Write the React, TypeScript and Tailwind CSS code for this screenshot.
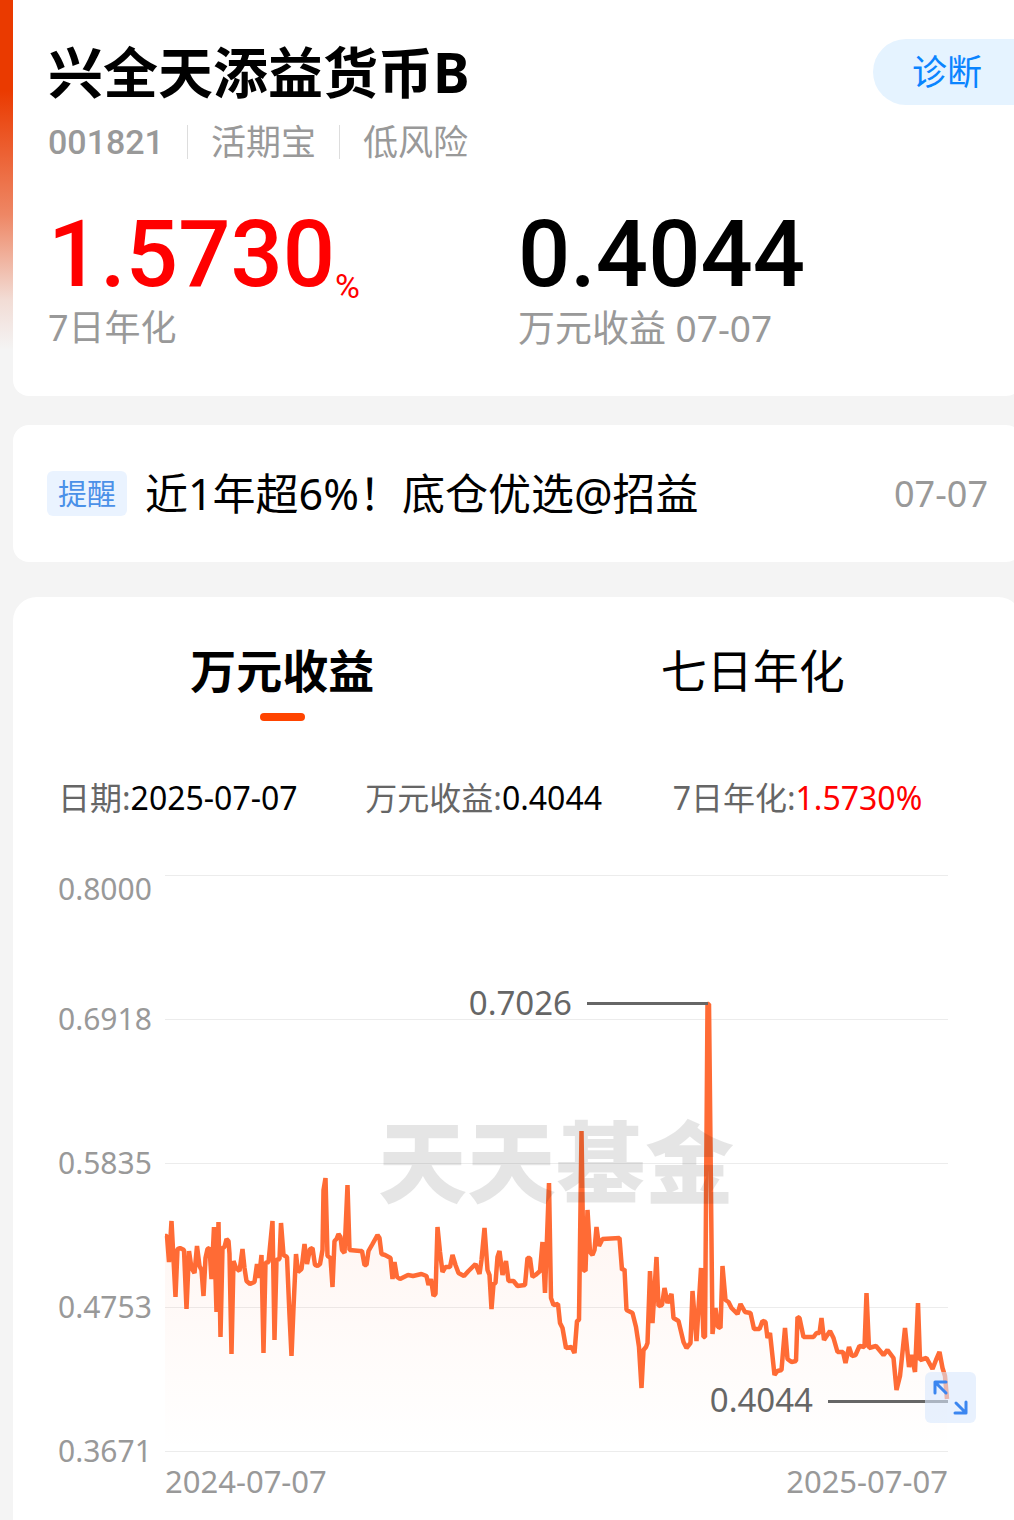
import { ReactNode } from "react";

const axisLabels = ["0.6918", "0.5835", "0.4753"];
const gridLines = [876, 1020, 1164, 1308, 1452];

const linePoints =
  "165,1236 167,1236 169,1262 171.5,1221 175.5,1297 177.5,1249 180,1248 184,1250 186.5,1309 189,1251 191.5,1268 194.5,1273 197,1246 199.5,1266 201.5,1270 203.5,1296 205.5,1258 207.5,1249 209.5,1248 211.5,1279 214,1227 216.5,1312 218.5,1222 220.5,1337 222.5,1248 224.5,1247 226.5,1239 228.5,1241 229.5,1254 231.5,1354 233.5,1261 236,1268 239.5,1271 242.5,1249 244.5,1268 246.5,1281 250,1284 254.5,1282 257,1264 259,1278 261.5,1255 263.5,1353 265.5,1263 268.5,1262 272.5,1221 274.5,1340 276.5,1260 279.5,1259 281,1223 283.5,1255 287,1257 289.5,1315 291.5,1356 293.5,1308 296,1254 298,1272 301.5,1269 304.5,1244 307,1264 310,1249 312.5,1248 315,1265 317.5,1266 320,1264 322.5,1250 323.5,1190 325.5,1178 327.5,1256 330.5,1258 332.5,1287 334.5,1241 336.5,1239 338.5,1234 340.5,1237 342,1250 344.5,1253 347.5,1185 349.5,1250 360,1251 362,1251 364.5,1265 366.5,1265 368.5,1251 372.5,1244 377.5,1235 379.5,1238 381.5,1254 385,1255 390.5,1258 392.5,1279 394.5,1262 397,1277 400,1279 408,1275 413,1276 421.5,1274 426.5,1276 428.5,1285 431,1279 433.5,1296 435.5,1294 437.5,1227 440,1252 442.5,1272 445.5,1267 450,1267 452.5,1255 455.5,1265 458.5,1273 464,1276 468.5,1271 475.5,1264 479.5,1274 481.5,1260 484.5,1228 487.5,1270 489.5,1275 491.5,1309 493.5,1284 495.5,1283 497.5,1257 499.5,1251 502.5,1275 506,1261 508.5,1281 513.5,1281 517.5,1286 525,1285 527.5,1258 530,1258 532.5,1277 535.5,1275 540,1271 542.5,1242 545,1293 549,1183 551,1298 553.5,1305 558,1304 560,1323 562.5,1328 566,1348 571.5,1347 574.5,1353 577,1321 579,1320 581.5,1131 583.5,1270 585.5,1271 587.5,1210 590,1252 592.5,1255 594.5,1250 596.5,1227 599,1246 602.5,1239 619.5,1238 622,1270 624.5,1269 626.5,1310 632.5,1313 636,1327 639,1347 641.5,1388 643.5,1350 646,1347 647.5,1343 650,1271 652.5,1323 656.5,1257 658.5,1306 662,1305 664.5,1288 667.5,1303 671.5,1294 673.5,1318 678.5,1321 683.5,1342 686.5,1348 690.5,1343 692.5,1291 696.5,1341 701,1268 703.5,1337 705,1337 707.5,1004 709,1004 712.5,1334 715.5,1308 718,1327 720.5,1328 722.5,1266 725.5,1300 728.5,1302 731.5,1308 737.5,1314 740.5,1304 745,1312 750.5,1313 754,1329 759.5,1329 762.5,1321 765.5,1322 767.5,1338 770,1333 774.5,1375 777.5,1371 781.5,1370 785,1328 787.5,1359 791.5,1362 796,1361 797.5,1317 799.5,1318 803.5,1337 813.5,1337 816.5,1333 819.5,1333 821.5,1318 824,1340 830,1331 833.5,1338 837.5,1352 843,1352 845.5,1363 849,1347 852,1356 855.5,1355 859.5,1346 864.5,1347 866.5,1293 869,1348 876,1346 883.5,1355 887.5,1350 893.5,1358 896.5,1390 900,1376 905,1328 909,1367 911.5,1355 915,1372 918,1303 920,1360 926.5,1358 932.5,1369 936,1360 939.5,1352 942.5,1368 945,1376 947,1399";

function YieldChart() {
  return (
    <svg viewBox="165 875 783 577" className="block w-full overflow-visible">
      <defs>
        <linearGradient id="area" x1="0" y1="0" x2="0" y2="1">
          <stop offset="0" stopColor="#ff6b35" stopOpacity="0.1" />
          <stop offset="0.5" stopColor="#ff6b35" stopOpacity="0.06" />
          <stop offset="1" stopColor="#ff6b35" stopOpacity="0" />
        </linearGradient>
      </defs>
      {gridLines.map((y) => (
        <line key={y} x1="165" x2="948" y1={y - 0.5} y2={y - 0.5} stroke="#ececec" />
      ))}
      <polygon points={`165,1451 ${linePoints} 947,1451`} fill="url(#area)" />
      <polyline
        points={linePoints}
        fill="none"
        stroke="#ff6b35"
        strokeWidth="4.5"
        strokeLinejoin="bevel"
      />
      <text
        x="378"
        y="1196"
        fill="#000"
        fillOpacity="0.1"
        className="text-[89px] font-black"
      >
        天天基金
      </text>
      <g stroke="#666" strokeWidth="3">
        <line x1="587" x2="708" y1="1003.5" y2="1003.5" />
        <line x1="828" x2="948" y1="1401.5" y2="1401.5" />
      </g>
      <g fill="#666" textAnchor="end" className="text-[33px]">
        <text x="572" y="1015">0.7026</text>
        <text x="813" y="1412">0.4044</text>
      </g>
    </svg>
  );
}

function InfoItem({ label, children }: { label: string; children: ReactNode }) {
  return (
    <div className="whitespace-nowrap text-[#666]">
      {label}:{children}
    </div>
  );
}

export default function App() {
  return (
    <div className="flex min-h-screen flex-col overflow-hidden bg-[#f4f4f4] bg-[linear-gradient(to_bottom,#ea3a00_0px,#ea3a00_90px,#ee8765_215px,#f2dcd5_300px,#f4f4f4_350px)] pl-[13px] font-['Noto_Sans','Noto_Sans_CJK_SC',sans-serif] text-black">
      <div className="-mr-2 rounded-b-2xl bg-white pt-[39px] pr-[34px] pb-[46px] pl-[35px]">
        <div className="flex items-start justify-between">
          <h1 className="text-[55px] leading-[66px] font-bold">兴全天添益货币B</h1>
          <button className="-mr-[34px] h-[66px] rounded-l-full bg-[#e5f3ff] pr-10 pl-[39px] text-[35px] leading-[66px] text-[#0a84ff]">
            诊断
          </button>
        </div>
        <div className="mt-5 flex h-[34px] items-center gap-[23px] text-[35px] leading-[34px] text-[#999]">
          <span className="font-['Roboto',sans-serif] text-[34px] font-medium">001821</span>
          <span className="h-full w-px bg-[#ddd]" />
          <span>活期宝</span>
          <span className="h-full w-px bg-[#ddd]" />
          <span>低风险</span>
        </div>
        <div className="mt-[46px] grid grid-cols-2">
          <div>
            <div className="flex items-end font-['Roboto',sans-serif] text-[92px] leading-[100px] font-medium text-[#f00]">
              1.5730
              <span className="text-[34px] leading-[38px] font-normal">%</span>
            </div>
            <div className="mt-px text-[36px] leading-[44px] text-[#999]">7日年化</div>
          </div>
          <div>
            <div className="font-['Roboto',sans-serif] text-[92px] leading-[100px] font-medium">
              0.4044
            </div>
            <div className="mt-px text-[37px] leading-[44px] text-[#999]">
              万元收益 07-07
            </div>
          </div>
        </div>
      </div>

      <a
        href="#"
        className="mt-[29px] -mr-2 flex h-[137px] items-center rounded-2xl bg-white px-[34px]"
      >
        <span className="rounded-md bg-[#eaf3ff] px-[11px] text-[29px] leading-[45px] text-[#4a90e8]">
          提醒
        </span>
        <span className="ml-[18px] text-[43px] leading-[60px]">近1年超6%！底仓优选@招益</span>
        <span className="ml-auto text-[36px] text-[#999]">07-07</span>
      </a>

      <div className="mt-[35px] -mr-2 flex-1 rounded-t-3xl bg-white px-[34px] pt-[43px] pb-5">
        <div className="grid grid-cols-2 text-[46px] leading-[60px]">
          <button className="flex flex-col items-center font-bold">
            万元收益
            <span className="mt-[13px] h-2 w-[45px] rounded-full bg-[#ff4400]" />
          </button>
          <button className="flex flex-col items-center">七日年化</button>
        </div>

        <div className="mt-[57px] grid grid-cols-3 pr-2 pl-[11px] text-[32px] leading-[40px]">
          <InfoItem label="日期">
            <span className="text-black">2025-07-07</span>
          </InfoItem>
          <InfoItem label="万元收益">
            <span className="text-black">0.4044</span>
          </InfoItem>
          <InfoItem label="7日年化">
            <span className="text-[#f00]">1.5730%</span>
          </InfoItem>
        </div>

        <div className="mt-[57px] flex pr-10 pl-[11px] text-[30px] leading-[28px] text-[#999]">
          <div className="w-[107px] shrink-0">
            <div className="h-[130px]">0.8000</div>
            {axisLabels.map((label) => (
              <div key={label} className="h-36">
                {label}
              </div>
            ))}
            <div>0.3671</div>
          </div>
          <div className="relative flex-1">
            <YieldChart />
            <button
              aria-label="全屏"
              className="absolute -right-7 bottom-[42px] size-[51px] rounded-md bg-[#d9e7fd]/60"
            >
              <svg
                viewBox="0 0 51 51"
                fill="none"
                stroke="#3b86f0"
                strokeWidth="3"
                strokeLinecap="round"
                strokeLinejoin="round"
              >
                <path d="M10 21V10H21M10 10L21 21M30 41H41V30M41 41L31 31" />
              </svg>
            </button>
          </div>
        </div>
        <div className="flex justify-between pr-10 pl-[118px] text-[31px] leading-8 text-[#999]">
          <span>2024-07-07</span>
          <span>2025-07-07</span>
        </div>
      </div>
    </div>
  );
}
